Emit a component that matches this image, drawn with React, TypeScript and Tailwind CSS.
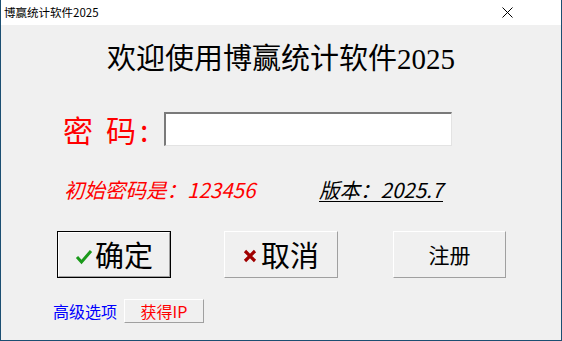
import React from 'react';

const cjk = { fontFamily: '"Noto Sans CJK SC", "Liberation Sans", sans-serif' };
const serif = { fontFamily: '"Liberation Serif", "Noto Sans CJK SC", serif' };

function WinButton({ children, primary, className }: { children: React.ReactNode; primary?: boolean; className: string }) {
  return (
    <div className={`${primary ? 'border border-black' : ''} ${className}`}>
      <div className="flex h-full w-full items-center justify-center border-t border-l border-t-white border-l-white border-r border-b border-r-[#a0a0a0] border-b-[#a0a0a0] bg-[#f0f0f0]">
        {children}
      </div>
    </div>
  );
}

export default function App() {
  return (
    <div className="flex h-[341px] w-[562px] flex-col overflow-hidden border-x border-b border-[#1b4f72] bg-[#f0f0f0]" style={cjk}>
      <div className="flex h-[25px] shrink-0 items-center justify-between bg-white pl-[3px] pr-[48px]">
        <span className="text-[11.5px] leading-none text-black">博赢统计软件2025</span>
        <svg width="11" height="11" viewBox="0 0 11 11">
          <path d="M0.5 0.5 L10.5 10.5 M10.5 0.5 L0.5 10.5" stroke="#000" strokeWidth="1" />
        </svg>
      </div>

      <div className="mt-[17px] text-center text-[29px] leading-[34px] text-black" style={serif}>
        欢迎使用博赢统计软件2025
      </div>

      <div className="mt-[36px] flex items-center pl-[62px]">
        <div className="flex w-[101px] items-center text-[30px] leading-none text-[#ff0000]">
          <span>密</span>
          <span className="ml-[13px]">码</span>
          <span className="ml-[4px]">:</span>
        </div>
        <div className="h-[34px] w-[288px] border-t-2 border-l-2 border-t-[#7a7a7a] border-l-[#7a7a7a] border-b border-r border-b-[#e3e3e3] border-r-[#e3e3e3] bg-white" />
      </div>

      <div className="mt-[30px] flex items-center pl-[63px] text-[20.5px] italic leading-[26px]">
        <span className="w-[255px] text-[#ff0000]">初始密码是：123456</span>
        <span className="border-b border-black leading-[24px] text-black">版本：2025.7</span>
      </div>

      <div className="mt-[29px] flex pl-[56px]">
        <WinButton primary className="h-[47px] w-[114px]">
          <svg width="18" height="16" viewBox="0 0 18 16" className="mr-[2px] mt-[4px]">
            <path d="M2 8 L6.5 13 L16 2" stroke="#1a9a1a" strokeWidth="3" fill="none" strokeLinejoin="miter" />
          </svg>
          <span className="text-[29px] leading-none text-black">确定</span>
        </WinButton>
        <WinButton className="ml-[53px] h-[47px] w-[114px]">
          <svg width="14" height="14" viewBox="0 0 14 14" className="mr-[4px] mt-[3px]">
            <path d="M2 2 L12 12 M12 2 L2 12" stroke="#a00000" strokeWidth="3.2" />
          </svg>
          <span className="text-[29px] leading-none text-black">取消</span>
        </WinButton>
        <WinButton className="ml-[55px] h-[47px] w-[113px]">
          <span className="text-[21px] leading-none text-black">注册</span>
        </WinButton>
      </div>

      <div className="mt-[21px] flex items-center pl-[52px]">
        <span className="w-[71px] text-[16px] leading-none text-[#0000ff]">高级选项</span>
        <WinButton className="h-[24px] w-[80px]">
          <span className="text-[16px] leading-none text-[#ff0000]">获得IP</span>
        </WinButton>
      </div>
    </div>
  );
}
